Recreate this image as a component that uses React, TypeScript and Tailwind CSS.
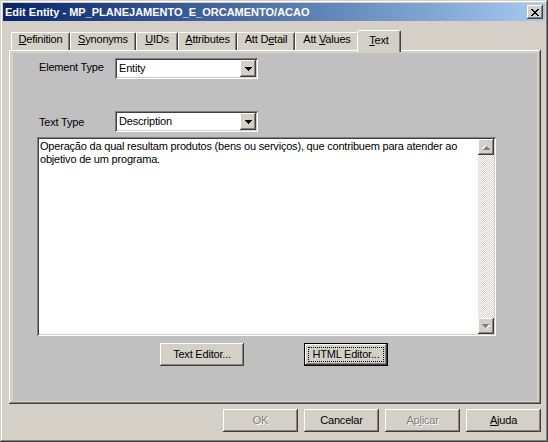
import type { ReactNode } from 'react';

const raised = 'shadow-[inset_-1px_-1px_0_#404040,inset_1px_1px_0_#fff,inset_-2px_-2px_0_#808080]';
const sunken = 'shadow-[inset_1px_1px_0_#808080,inset_-1px_-1px_0_#fff,inset_2px_2px_0_#404040,inset_-2px_-2px_0_#d4d0c8]';

function Mn({ text, i }: { text: string; i: number }) {
	if (i < 0) return <>{text}</>;
	return (
		<>
			{text.slice(0, i)}
			<u className="underline-offset-[1px]">{text[i]}</u>
			{text.slice(i + 1)}
		</>
	);
}

const ArrowDown = ({ fill = '#000' }: { fill?: string }) => (
	<svg width="7" height="4" viewBox="0 0 7 4" shapeRendering="crispEdges">
		<path fill={fill} d="M0 0h7v1H0z M1 1h5v1H1z M2 2h3v1H2z M3 3h1v1H3z" />
	</svg>
);

const GreyArrow = ({ up }: { up?: boolean }) => (
	<svg width="8" height="5" viewBox="0 0 8 5" shapeRendering="crispEdges" className={up ? 'rotate-180' : ''}>
		<path fill="#fff" d="M1 1h7v1H1z M2 2h5v1H2z M3 3h3v1H3z M4 4h1v1H4z" />
		<path fill="#808080" d="M0 0h7v1H0z M1 1h5v1H1z M2 2h3v1H2z M3 3h1v1H3z" />
	</svg>
);

function Tab({ label, i, w, active }: { label: string; i: number; w: string; active?: boolean }) {
	return (
		<div
			className={`${w} flex justify-center rounded-t-[2px] border-t border-l border-r border-t-white border-l-white border-r-[#404040] bg-[#d4d0c8] shadow-[inset_-1px_0_0_#808080] ${
				active ? 'relative z-10 -mb-[2px] -ml-[2px] h-[22px] pt-[3px]' : 'h-[18px]'
			}`}
		>
			<span className="whitespace-nowrap">
				<Mn text={label} i={i} />
			</span>
		</div>
	);
}

function Select({ value }: { value: string }) {
	return (
		<div className={`flex h-[21px] w-[143px] items-stretch bg-white p-[2px] ${sunken}`}>
			<span className="flex-1 pl-[2px] pt-[2px]">{value}</span>
			<div className={`flex w-[16px] items-center justify-center bg-[#d4d0c8] ${raised}`}>
				<ArrowDown />
			</div>
		</div>
	);
}

function Button({
	children,
	w = 'w-[75px]',
	disabled,
	focused,
}: {
	children: ReactNode;
	w?: string;
	disabled?: boolean;
	focused?: boolean;
}) {
	if (focused) {
		return (
			<div className={`${w} h-[23px] border border-black bg-[#d4d0c8]`}>
				<div className={`flex h-full items-center justify-center p-[3px] ${raised}`}>
					<div className="flex h-full w-full items-center justify-center border border-dotted border-black">
						{children}
					</div>
				</div>
			</div>
		);
	}
	return (
		<div
			className={`${w} flex h-[23px] items-center justify-center bg-[#d4d0c8] ${raised} ${
				disabled ? 'text-[#808080] [text-shadow:1px_1px_0_#fff]' : ''
			}`}
		>
			{children}
		</div>
	);
}

export default function App() {
	return (
		<div className="h-[442px] w-[548px] bg-[#d4d0c8] p-[3px] font-['Liberation_Sans',Arial,sans-serif] text-[11px] leading-[13px] tracking-[-0.2px] text-black shadow-[inset_-1px_-1px_0_#404040,inset_1px_1px_0_#d4d0c8,inset_-2px_-2px_0_#808080,inset_2px_2px_0_#fff]">
			{/* title bar */}
			<div className="flex h-[18px] items-center bg-gradient-to-r from-[#0a246a] to-[#a6caf0] pl-[2px] pr-[2px]">
				<span className="flex-1 whitespace-nowrap font-bold tracking-normal text-white">
					Edit Entity - MP_PLANEJAMENTO_E_ORCAMENTO/ACAO
				</span>
				<div className={`flex h-[14px] w-[16px] items-center justify-center bg-[#d4d0c8] ${raised}`}>
					<svg width="8" height="7" viewBox="0 0 8 7" shapeRendering="crispEdges">
						<path
							fill="#000"
							d="M0 0h2v1H0z M6 0h2v1H6z M1 1h2v1H1z M5 1h2v1H5z M2 2h4v1H2z M3 3h2v1H3z M2 4h4v1H2z M1 5h2v1H1z M5 5h2v1H5z M0 6h2v1H0z M6 6h2v1H6z"
						/>
					</svg>
				</div>
			</div>

			{/* tabs */}
			<div className="ml-[8px] mt-[9px] flex h-[20px] items-end">
				<Tab label="Definition" i={0} w="w-[59px]" />
				<Tab label="Synonyms" i={0} w="w-[66px]" />
				<Tab label="UIDs" i={0} w="w-[42px]" />
				<Tab label="Attributes" i={0} w="w-[59px]" />
				<Tab label="Att Detail" i={5} w="w-[58px]" />
				<Tab label="Att Values" i={4} w="w-[64px]" />
				<Tab label="Text" i={0} w="w-[44px]" active />
			</div>

			{/* tab page */}
			<div className="ml-[6px] mr-[4px] h-[354px] bg-[#d4d0c8] pb-[3px] pl-[4px] pr-[4px] pt-[3px] shadow-[inset_-1px_-1px_0_#404040,inset_1px_1px_0_#fff,inset_-2px_-2px_0_#808080]">
				<div className="flex h-full flex-col bg-[#c0c0c0] pl-[24px] pt-[5px]">
					<div className="flex h-[21px] items-center">
						<span className="w-[78px] pl-[2px] pb-[2px]">Element Type</span>
						<Select value="Entity" />
					</div>
					<div className="mt-[32px] flex h-[21px] items-center">
						<span className="w-[78px] pl-[2px] pt-[1px]">Text Type</span>
						<Select value="Description" />
					</div>

					<div className={`mt-[5px] flex h-[199px] w-[459px] bg-white p-[2px] ${sunken}`}>
						<div className="flex-1 whitespace-nowrap pl-[1px] pt-[1px]">
							Operação da qual resultam produtos (bens ou serviços), que contribuem para atender ao
							<br />
							objetivo de um programa.
						</div>
						<div className="flex w-[16px] flex-col bg-[repeating-conic-gradient(#fff_0_25%,#d4d0c8_0_50%)] bg-[length:2px_2px]">
							<div className={`flex h-[16px] items-center justify-center bg-[#d4d0c8] ${raised}`}>
								<GreyArrow up />
							</div>
							<div className="flex-1" />
							<div className={`flex h-[16px] items-center justify-center bg-[#d4d0c8] ${raised}`}>
								<GreyArrow />
							</div>
						</div>
					</div>

					<div className="mt-[7px] flex gap-[60px] pl-[123px]">
						<Button w="w-[84px]">Text Editor...</Button>
						<Button w="w-[84px]" focused>
							HTML Editor...
						</Button>
					</div>
				</div>
			</div>

			{/* dialog buttons */}
			<div className="mr-[4px] mt-[5px] flex justify-end gap-[6px]">
				<Button disabled>OK</Button>
				<Button>Cancelar</Button>
				<Button disabled>
					<Mn text="Aplicar" i={2} />
				</Button>
				<Button>
					<Mn text="Ajuda" i={0} />
				</Button>
			</div>
		</div>
	);
}
